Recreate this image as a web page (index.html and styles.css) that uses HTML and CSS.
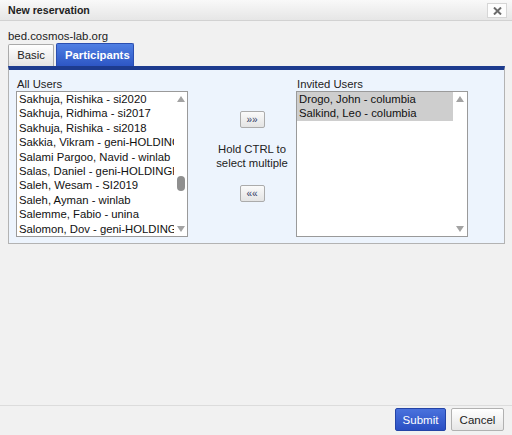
FILE: index.html
```html
<!DOCTYPE html>
<html>
<head>
<meta charset="utf-8">
<link rel="stylesheet" href="styles.css">
</head>
<body>
<div class="dialog">
  <div class="titlebar">
    <span class="title">New reservation</span>
    <button class="close" aria-label="close">
      <svg width="9" height="8" viewBox="0 0 9 8"><path d="M1 0.5 L8 7.5 M8 0.5 L1 7.5" stroke="#6a6a6a" stroke-width="2" fill="none"/></svg>
    </button>
  </div>
  <div class="content">
    <div class="host">bed.cosmos-lab.org</div>
    <div class="tabs">
      <div class="tab">Basic</div>
      <div class="tab active">Participants</div>
    </div>
    <div class="panel">
      <div class="col">
        <div class="label">All Users</div>
        <div class="listbox">
          <div class="items">
            <div class="item">Sakhuja, Rishika - si2020</div>
            <div class="item">Sakhuja, Ridhima - si2017</div>
            <div class="item">Sakhuja, Rishika - si2018</div>
            <div class="item">Sakkia, Vikram - geni-HOLDINGPEN</div>
            <div class="item">Salami Pargoo, Navid - winlab</div>
            <div class="item">Salas, Daniel - geni-HOLDINGPEN</div>
            <div class="item">Saleh, Wesam - SI2019</div>
            <div class="item">Saleh, Ayman - winlab</div>
            <div class="item">Salemme, Fabio - unina</div>
            <div class="item">Salomon, Dov - geni-HOLDINGPEN</div>
          </div>
          <div class="scrollbar">
            <span class="arrow up"></span>
            <span class="track"><span class="thumb"></span></span>
            <span class="arrow down"></span>
          </div>
        </div>
      </div>
      <div class="mid">
        <button class="move">»»</button>
        <div class="hint">Hold CTRL to<br>select multiple</div>
        <button class="move">««</button>
      </div>
      <div class="col">
        <div class="label">Invited Users</div>
        <div class="listbox">
          <div class="items">
            <div class="item sel">Drogo, John - columbia</div>
            <div class="item sel">Salkind, Leo - columbia</div>
          </div>
          <div class="scrollbar light">
            <span class="arrow up"></span>
            <span class="track"></span>
            <span class="arrow down"></span>
          </div>
        </div>
      </div>
    </div>
  </div>
  <div class="footer">
    <button class="btn primary">Submit</button>
    <button class="btn">Cancel</button>
  </div>
</div>
</body>
</html>
```
FILE: styles.css
```css
* { box-sizing: border-box; }
html, body {
  margin: 0;
  padding: 0;
  height: 435px;
  background: #f1f1f1;
  font-family: "Liberation Sans", Arial, sans-serif;
  color: #111;
  overflow: hidden;
}
.dialog {
  height: 435px;
  display: flex;
  flex-direction: column;
}
.titlebar {
  height: 21px;
  display: flex;
  align-items: center;
  justify-content: space-between;
  padding: 0 5px 0 8px;
  background: linear-gradient(#f9f9f9, #e6e6e6);
  border-bottom: 1px solid #d2d2d2;
}
.title {
  font-weight: bold;
  font-size: 10.6px;
  color: #222;
}
.close {
  width: 20px;
  height: 15px;
  margin-top: 1px;
  padding: 0;
  border: 1px solid #d6d6d6;
  background: #fdfdfd;
  display: flex;
  align-items: center;
  justify-content: center;
}
.content {
  flex: 1;
  padding: 8px 7px 0 8px;
}
.host {
  font-size: 11.4px;
  line-height: 14px;
  color: #222;
}
.tabs {
  display: flex;
  align-items: flex-end;
  gap: 2px;
  margin-top: 1px;
  height: 22px;
}
.tab {
  height: 22px;
  padding: 0 8px;
  font-size: 11.3px;
  line-height: 21px;
  border: 1px solid #aaa;
  border-bottom: none;
  border-radius: 2px 2px 0 0;
  background: linear-gradient(#ffffff, #e3e3e3);
  color: #222;
  width: 46px;
  text-align: center;
}
.tab.active {
  width: 78px;
  height: 23px;
  line-height: 22px;
  font-weight: bold;
  color: #fff;
  border-color: #2a4eb0;
  background: linear-gradient(#4f7fe3, #2d56c4);
}
.panel {
  border-top: 4px solid #1d3b8e;
  border-left: 1px solid #b3b3b3;
  border-right: 1px solid #b3b3b3;
  border-bottom: 1px solid #b3b3b3;
  background: #edf4fd;
  padding: 7px 36px 6px 7px;
  display: flex;
  width: 497px;
}
.col {
  width: 172px;
  display: flex;
  flex-direction: column;
}
.label {
  font-size: 11.3px;
  line-height: 14px;
  padding-left: 1px;
  color: #222;
}
.listbox {
  height: 146px;
  background: #fff;
  border: 1px solid #9a9a9a;
  display: flex;
  overflow: hidden;
}
.items {
  flex: 1;
  min-width: 0;
  overflow: hidden;
}
.item {
  font-size: 11.3px;
  line-height: 14.4px;
  padding-left: 2px;
  white-space: nowrap;
  overflow: hidden;
  text-overflow: clip;
  color: #111;
}
.item.sel {
  background: #cecece;
}
.scrollbar {
  width: 13px;
  display: flex;
  flex-direction: column;
  align-items: center;
  padding: 4px 0 4px;
}
.scrollbar.light {
  width: 14px;
}
.arrow {
  width: 0;
  height: 0;
  border-left: 4.5px solid transparent;
  border-right: 4.5px solid transparent;
}
.arrow.up {
  border-bottom: 6px solid #a3a3a3;
}
.arrow.down {
  border-top: 6px solid #a3a3a3;
}
.track {
  flex: 1;
  width: 100%;
  display: flex;
  justify-content: center;
}
.thumb {
  width: 8px;
  height: 15px;
  margin-top: 74px;
  border-radius: 4px;
  background: #8f8f8f;
}
.mid {
  width: 108px;
  padding: 34px 0 0 20px;
  display: flex;
  flex-direction: column;
  align-items: center;
}
.move {
  width: 25px;
  height: 17px;
  padding: 0;
  font-family: "Liberation Sans", Arial, sans-serif;
  font-size: 10px;
  line-height: 14px;
  color: #2f3a66;
  border: 1px solid #ababab;
  border-radius: 2px;
  background: linear-gradient(#fafafa, #e4e4e4);
}
.hint {
  margin: 15px 0;
  font-size: 11.3px;
  line-height: 13.5px;
  text-align: center;
  color: #222;
  white-space: nowrap;
}
.footer {
  height: 30px;
  border-top: 1px solid #dcdcdc;
  display: flex;
  justify-content: flex-end;
  gap: 5px;
  padding: 2px 8px 0 0;
}
.btn {
  height: 23px;
  padding: 0;
  width: 53px;
  font-family: "Liberation Sans", Arial, sans-serif;
  font-size: 11.5px;
  color: #222;
  border: 1px solid #b1b1b1;
  border-radius: 2px;
  background: linear-gradient(#ffffff, #e6e6e6);
}
.btn.primary {
  width: 51px;
  color: #fff;
  border-color: #2444a6;
  background: linear-gradient(#4a72dd, #2a4fc3);
}
```
